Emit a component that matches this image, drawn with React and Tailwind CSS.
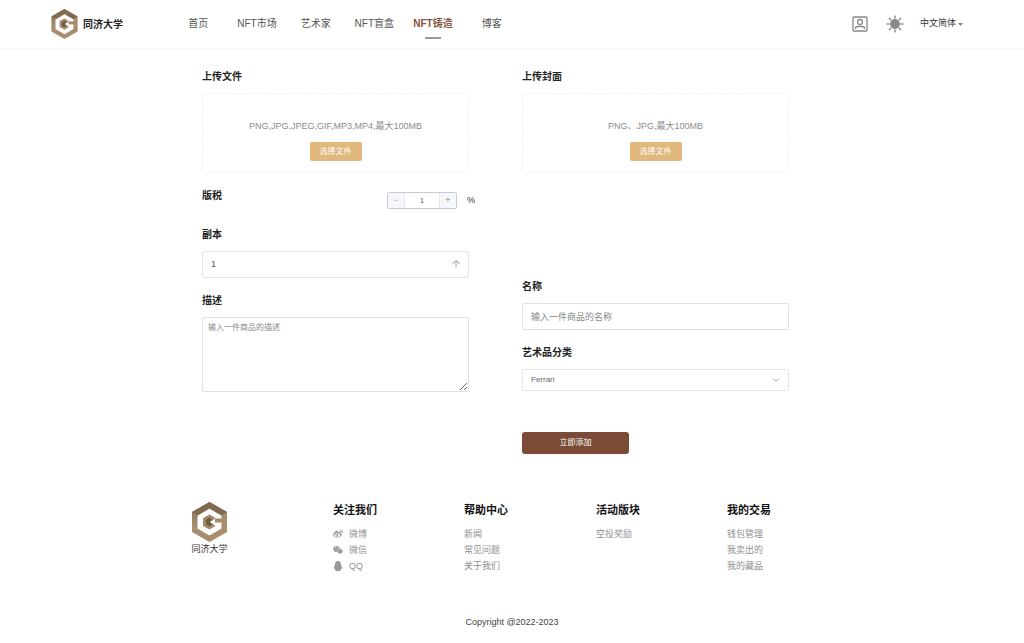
import React from "react";
import { FaWeibo, FaWeixin, FaQq } from "react-icons/fa";

function Logo({ className }) {
  return (
    <svg viewBox="0 0 70 80" className={className} aria-hidden="true">
      <defs>
        <linearGradient id="bronze" x1="0" y1="0" x2="0.6" y2="1">
          <stop offset="0" stopColor="#86705a" />
          <stop offset="0.5" stopColor="#a68e72" />
          <stop offset="1" stopColor="#ab8c6a" />
        </linearGradient>
      </defs>
      <path fill="url(#bronze)" fillRule="evenodd" d="M35 0 70 20V60L35 80 0 60V20ZM35 13 11 27V53L35 67 59 53V27Z" />
      <path fill="#806a50" d="M35 0 70 20 59 27 35 13 11 27 0 20Z" />
      <path fill="#a58a69" d="M35 25 47 32 41 37 36 35V45L41 43 47 48 35 55 22 48V32Z" />
      <path fill="#715c46" d="M35 31 41 36 36 40 41 44 35 49 28 45V35Z" />
      <path fill="#a58a69" d="M46 33H62V41H46Z" />
    </svg>
  );
}

const nav = ["首页", "NFT市场", "艺术家", "NFT盲盒", "NFT铸造", "博客"];

function Header() {
  return (
    <header className="flex h-[50px] items-center border-b-2 border-[#f8f8f8] pr-[61px] pl-[51px]">
      <a href="#home" className="flex items-center gap-[5px] text-[10px] font-bold text-[#222]">
        <Logo className="h-[30px] w-[27px]" />
        同济大学
      </a>
      <nav className="ml-[46px] grid w-[352px] grid-cols-6">
        {nav.map((item) => {
          const active = item === "NFT铸造";
          return (
            <a
              key={item}
              href="#nav"
              className={
                active
                  ? "relative text-center text-[10px] leading-4 font-bold whitespace-nowrap text-[#84523f]"
                  : "text-center text-[10px] leading-4 whitespace-nowrap text-[#555]"
              }
            >
              {item}
              {active && <span className="absolute top-[21px] left-1/2 h-[2px] w-4 -translate-x-1/2 bg-[#999]" />}
            </a>
          );
        })}
      </nav>
      <div className="ml-auto flex items-center text-[#888]">
        <button aria-label="个人中心">
          <svg viewBox="0 0 16 16" className="size-4" fill="none" stroke="currentColor" strokeWidth="1.3">
            <rect x="1" y="1" width="14" height="14" rx="1" />
            <circle cx="8" cy="6" r="2.5" />
            <path d="M3.500 13v-.5c0-1.500 1-2 2-2h5c1 0 2 .5 2 2v.5" />
          </svg>
        </button>
        <button aria-label="主题" className="ml-[18px]">
          <svg viewBox="0 0 18 18" className="size-[18px]" stroke="currentColor" strokeWidth="1.5">
            <circle cx="9" cy="9" r="5" fill="currentColor" stroke="none" />
            <path d="M9 .5v3M9 14.500v3M.5 9h3M14.500 9h3M3 3l2 2M13 13l2 2M15 3l-2 2M5 13l-2 2" />
          </svg>
        </button>
        <button className="ml-4 flex items-center gap-[2px] text-[9px] text-[#333]">
          中文简体
          <svg viewBox="0 0 5 3" className="h-[3px] w-[5px]" fill="#888">
            <path d="M0 0h5L2.500 3Z" />
          </svg>
        </button>
      </div>
    </header>
  );
}

const labelClass = "block text-[10px] leading-4 font-bold text-[#222]";

function Upload({ id, title, hint }) {
  return (
    <section>
      <h2 id={id} className={labelClass}>{title}</h2>
      <div className="mt-2 flex h-20 flex-col items-center rounded border border-dashed border-[#f0f0f0] pt-6">
        <p className="text-[9px] leading-4 whitespace-nowrap text-[#8c8c8c]">{hint}</p>
        <button type="button" aria-describedby={id} className="mt-2 h-[19px] w-[52px] rounded-[2px] bg-[#e0b87c] text-[8px] text-white">
          选择文件
        </button>
      </div>
    </section>
  );
}

function MintForm() {
  return (
    <form className="mx-auto grid max-w-[640px] grid-cols-2" onSubmit={(e) => e.preventDefault()}>
      <div className="pr-[43px] pl-[10px]">
        <Upload id="file" title="上传文件" hint="PNG,JPG,JPEG,GIF,MP3,MP4,最大100MB" />
        <div className="mt-[15px] -mr-[6px] flex items-start">
          <label htmlFor="royalty" className={labelClass}>版税</label>
          <div className="mt-1 ml-auto flex h-[17px] w-[70px] rounded-[2px] border border-[#c9cbd6] text-[9px]">
            <button type="button" aria-label="减少" className="w-[17px] border-r border-[#e4e7ed] bg-[#f5f7fa] leading-none text-[#bbb]">−</button>
            <input id="royalty" defaultValue="1" className="w-0 flex-1 text-center text-[8px] text-[#666] outline-none" />
            <button type="button" aria-label="增加" className="w-[17px] border-l border-[#e4e7ed] bg-[#f5f7fa] leading-none text-[#888]">+</button>
          </div>
          <span className="mt-1 ml-[10px] text-[9px] leading-4 text-[#333]">%</span>
        </div>
        <label htmlFor="copies" className={`mt-[18px] ${labelClass}`}>副本</label>
        <div className="mt-2 flex h-[27px] items-center rounded-[2px] border border-[#e4e4e4] px-2 text-[9px]">
          <input id="copies" defaultValue="1" className="w-0 flex-1 text-[#555] outline-none" />
          <span className="text-[8px] text-[#777]">个</span>
        </div>
        <label htmlFor="desc" className={`mt-[15px] ${labelClass}`}>描述</label>
        <textarea
          id="desc"
          placeholder="输入一件商品的描述"
          className="mt-2 block h-[75px] w-full rounded-[2px] border border-[#e0e0e0] px-[5px] py-1 text-[8px] leading-3 outline-none placeholder:text-[#888]"
        />
      </div>
      <div className="pr-[43px] pl-[10px]">
        <Upload id="cover" title="上传封面" hint="PNG、JPG,最大100MB" />
        <label htmlFor="name" className={`mt-[106px] ${labelClass}`}>名称</label>
        <input
          id="name"
          placeholder="输入一件商品的名称"
          className="mt-2 block h-[27px] w-full rounded-[2px] border border-[#e0e0e0] px-2 text-[9px] outline-none placeholder:text-[#888]"
        />
        <label htmlFor="category" className={`mt-[15px] ${labelClass}`}>艺术品分类</label>
        <div className="mt-2 flex h-[22px] items-center rounded-[2px] border border-[#e6e6e6] pr-[9px] pl-2">
          <select id="category" className="h-full flex-1 appearance-none bg-transparent text-[8px] text-[#666] outline-none">
            <option>Ferrari</option>
          </select>
          <svg viewBox="0 0 6 4" className="h-1 w-[6px]" fill="none" stroke="#aaa">
            <path d="m.5.5 2.500 2.500L5.500.5" />
          </svg>
        </div>
        <button className="mt-[41px] block h-[22px] w-[107px] rounded-[3px] bg-[#7b4b37] text-[8px] text-white">立即添加</button>
      </div>
    </form>
  );
}

const columns = [
  { title: "关注我们", links: [["微博", FaWeibo], ["微信", FaWeixin], ["QQ", FaQq]] },
  { title: "帮助中心", links: [["新闻"], ["常见问题"], ["关于我们"]] },
  { title: "活动版块", links: [["空投奖励"]] },
  { title: "我的交易", links: [["钱包管理"], ["我卖出的"], ["我的藏品"]] },
];

function Footer() {
  return (
    <footer className="mt-12">
      <div className="mx-auto grid max-w-[640px] grid-cols-[141px_131px_132px_131px_1fr]">
        <div className="flex w-[35px] flex-col items-center">
          <Logo className="h-10 w-[35px]" />
          <span className="text-[9px] leading-[14px] whitespace-nowrap text-[#333]">同济大学</span>
        </div>
        {columns.map((col) => (
          <section key={col.title}>
            <h3 className="text-[11px] leading-4 font-bold text-[#111]">{col.title}</h3>
            <ul className="mt-2 text-[9px] leading-4 text-[#909090]">
              {col.links.map(([name, Icon]) => (
                <li key={name}>
                  <a href="#link" className="flex items-center gap-[6px]">
                    {Icon && <Icon className="size-[10px] text-[#999]" />}
                    {name}
                  </a>
                </li>
              ))}
            </ul>
          </section>
        ))}
      </div>
      <p className="mt-10 pb-[13px] text-center text-[9px] leading-4 text-[#444]">Copyright @2022-2023</p>
    </footer>
  );
}

export default function App() {
  return (
    <div className="min-h-screen bg-white font-['Liberation_Sans','Noto_Sans_CJK_SC',sans-serif]">
      <Header />
      <main className="pt-[19px]">
        <MintForm />
      </main>
      <Footer />
    </div>
  );
}
